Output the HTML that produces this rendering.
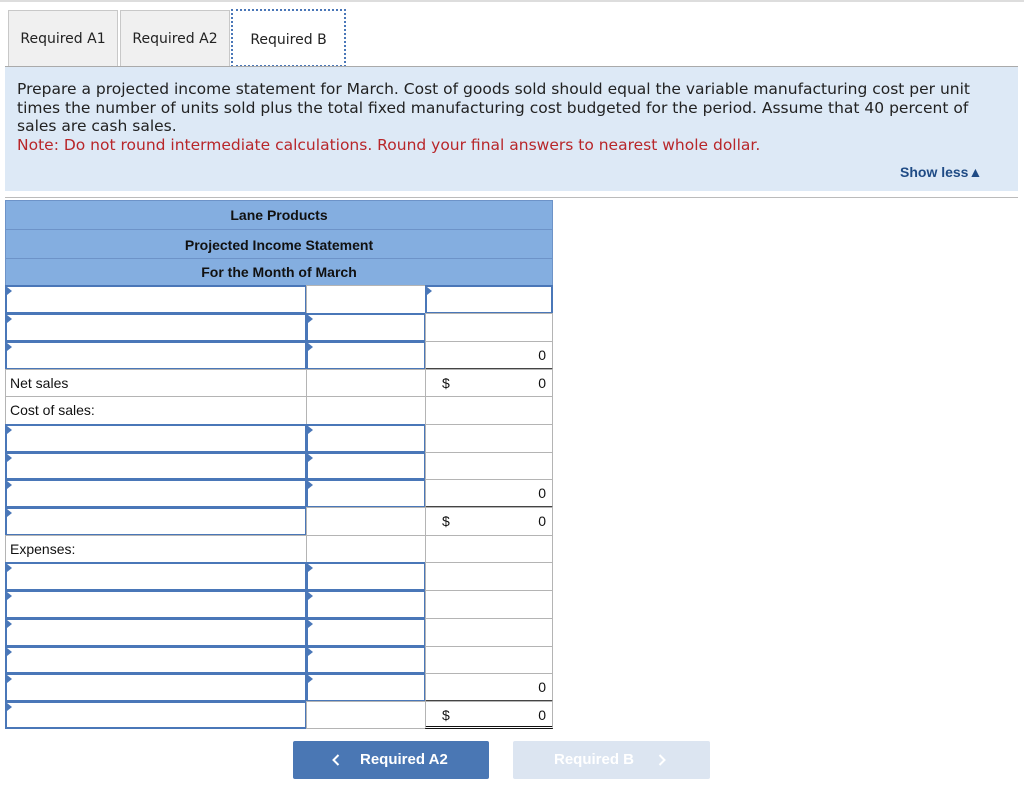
<!DOCTYPE html>
<html><head><meta charset="utf-8"><style>
body{margin:0;width:1024px;height:807px;background:#fff;position:relative;font-family:"Liberation Sans",Arial,sans-serif;overflow:hidden}
.a{position:absolute;box-sizing:border-box}
.tab{top:10px;height:57px;background:#f0f0f0;border:1px solid #c8c8c8;border-bottom:none;font-family:"DejaVu Sans",Verdana,sans-serif;font-size:14px;color:#222;line-height:56px;text-align:center}
.p{font-family:"DejaVu Sans",Verdana,sans-serif;font-size:15.5px;color:#222;line-height:18.5px;white-space:nowrap}
.h{left:5px;width:548px;background:#84aee0;border:1px solid #6d93c8;font-weight:bold;font-size:14px;text-align:center;color:#111}
.i{border:2px solid #4a77b8;background:#fff}
.i::before{content:"";position:absolute;left:0;top:0;border-left:5px solid #4a77b8;border-top:4px solid transparent;border-bottom:4px solid transparent}
.c{border:1px solid #b4b4b4;background:#fff;font-size:14px;color:#111;padding-left:4px;line-height:26px}
.n{text-align:right;padding-right:6px}
.d{position:absolute;left:16px}
</style></head><body>
<div class="a" style="left:0;top:0;width:1024px;height:2px;background:#ddd"></div>
<div class="a tab" style="left:8px;width:110px">Required A1</div>
<div class="a tab" style="left:120px;width:110px">Required A2</div>
<div class="a tab" style="left:231px;top:9px;width:115px;height:58px;background:#fff;border:2px dotted #4a77b8;line-height:58px">Required B</div>
<div class="a" style="left:5px;top:66px;width:1013px;height:1px;background:#aaa"></div>
<div class="a" style="left:5px;top:67px;width:1013px;height:124px;background:#dde9f6"></div>
<div class="a p" style="left:17px;top:80px">Prepare a projected income statement for March. Cost of goods sold should equal the variable manufacturing cost per unit<br>times the number of units sold plus the total fixed manufacturing cost budgeted for the period. Assume that 40 percent of<br>sales are cash sales.<br><span style="color:#b8262a">Note: Do not round intermediate calculations. Round your final answers to nearest whole dollar.</span></div>
<div class="a" style="left:900px;top:164px;font-weight:bold;font-size:14px;color:#1f4b85">Show less&#9650;</div>
<div class="a" style="left:5px;top:197px;width:1013px;height:1px;background:#bbb"></div>
<div class="a h" style="top:200px;height:30px;line-height:29px">Lane Products</div>
<div class="a h" style="top:229px;height:30px;line-height:31px">Projected Income Statement</div>
<div class="a h" style="top:258px;height:28px;line-height:27px">For the Month of March</div>

<div class="a i" style="left:5px;top:285px;width:302px;height:29px"></div>
<div class="a c" style="left:306px;top:285px;width:120px;height:29px"></div>
<div class="a i" style="left:425px;top:285px;width:128px;height:29px"></div>
<div class="a i" style="left:5px;top:313px;width:302px;height:29px"></div>
<div class="a i" style="left:306px;top:313px;width:120px;height:29px"></div>
<div class="a c" style="left:425px;top:313px;width:128px;height:29px"></div>
<div class="a i" style="left:5px;top:341px;width:302px;height:29px"></div>
<div class="a i" style="left:306px;top:341px;width:120px;height:29px"></div>
<div class="a c n" style="left:425px;top:341px;width:128px;height:29px;border-bottom:2px solid #444">0</div>
<div class="a c" style="left:5px;top:369px;width:302px;height:28px">Net sales</div>
<div class="a c" style="left:306px;top:369px;width:120px;height:28px"></div>
<div class="a c n" style="left:425px;top:369px;width:128px;height:28px"><span class="d">$</span>0</div>
<div class="a c" style="left:5px;top:396px;width:302px;height:29px">Cost of sales:</div>
<div class="a c" style="left:306px;top:396px;width:120px;height:29px"></div>
<div class="a c" style="left:425px;top:396px;width:128px;height:29px"></div>
<div class="a i" style="left:5px;top:424px;width:302px;height:29px"></div>
<div class="a i" style="left:306px;top:424px;width:120px;height:29px"></div>
<div class="a c" style="left:425px;top:424px;width:128px;height:29px"></div>
<div class="a i" style="left:5px;top:452px;width:302px;height:28px"></div>
<div class="a i" style="left:306px;top:452px;width:120px;height:28px"></div>
<div class="a c" style="left:425px;top:452px;width:128px;height:28px"></div>
<div class="a i" style="left:5px;top:479px;width:302px;height:29px"></div>
<div class="a i" style="left:306px;top:479px;width:120px;height:29px"></div>
<div class="a c n" style="left:425px;top:479px;width:128px;height:29px;border-bottom:2px solid #444">0</div>
<div class="a i" style="left:5px;top:507px;width:302px;height:29px"></div>
<div class="a c" style="left:306px;top:507px;width:120px;height:29px"></div>
<div class="a c n" style="left:425px;top:507px;width:128px;height:29px"><span class="d">$</span>0</div>
<div class="a c" style="left:5px;top:535px;width:302px;height:28px">Expenses:</div>
<div class="a c" style="left:306px;top:535px;width:120px;height:28px"></div>
<div class="a c" style="left:425px;top:535px;width:128px;height:28px"></div>
<div class="a i" style="left:5px;top:562px;width:302px;height:29px"></div>
<div class="a i" style="left:306px;top:562px;width:120px;height:29px"></div>
<div class="a c" style="left:425px;top:562px;width:128px;height:29px"></div>
<div class="a i" style="left:5px;top:590px;width:302px;height:29px"></div>
<div class="a i" style="left:306px;top:590px;width:120px;height:29px"></div>
<div class="a c" style="left:425px;top:590px;width:128px;height:29px"></div>
<div class="a i" style="left:5px;top:618px;width:302px;height:29px"></div>
<div class="a i" style="left:306px;top:618px;width:120px;height:29px"></div>
<div class="a c" style="left:425px;top:618px;width:128px;height:29px"></div>
<div class="a i" style="left:5px;top:646px;width:302px;height:28px"></div>
<div class="a i" style="left:306px;top:646px;width:120px;height:28px"></div>
<div class="a c" style="left:425px;top:646px;width:128px;height:28px"></div>
<div class="a i" style="left:5px;top:673px;width:302px;height:29px"></div>
<div class="a i" style="left:306px;top:673px;width:120px;height:29px"></div>
<div class="a c n" style="left:425px;top:673px;width:128px;height:29px;border-bottom:2px solid #444">0</div>
<div class="a i" style="left:5px;top:701px;width:302px;height:28px"></div>
<div class="a c" style="left:306px;top:701px;width:120px;height:28px"></div>
<div class="a c n" style="left:425px;top:701px;width:128px;height:28px;border-bottom:3px double #111"><span class="d">$</span>0</div>

<div class="a" style="left:293px;top:741px;width:196px;height:38px;background:#4a77b4;border-radius:2px;color:#fff;font-weight:bold;font-size:15px;line-height:38px">
<svg style="position:absolute;left:39px;top:13px" width="8" height="12" viewBox="0 0 8 12"><path d="M6.5 1L1.5 6l5 5" fill="none" stroke="#fff" stroke-width="2"/></svg>
<span style="position:absolute;left:67px">Required A2</span></div>
<div class="a" style="left:513px;top:741px;width:197px;height:38px;background:#dce5f1;border-radius:2px;color:#fff;font-weight:bold;font-size:15px;line-height:38px"><span style="position:absolute;left:41px">Required B</span>
<svg style="position:absolute;left:145px;top:13px" width="8" height="12" viewBox="0 0 8 12"><path d="M1.5 1l5 5-5 5" fill="none" stroke="#fff" stroke-width="2"/></svg></div>
</body></html>
